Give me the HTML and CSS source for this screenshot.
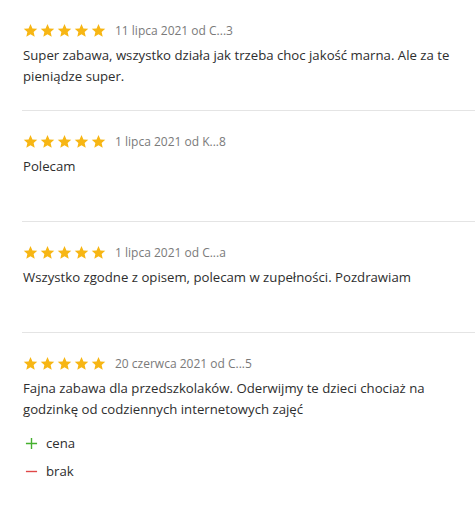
FILE: index.html
```html
<!DOCTYPE html>
<html lang="pl">
<head>
<meta charset="utf-8">
<link rel="stylesheet" href="styles.css">
</head>
<body>
<div class="reviews">
  <div class="review">
    <div class="meta">
      <span class="stars"><svg class="star" viewBox="0 0 24 24"><path d="M12 1.5l3.1 7.1 7.7.7-5.8 5.1 1.7 7.6L12 18l-6.7 4 1.7-7.6L1.2 9.3l7.7-.7z"/></svg><svg class="star" viewBox="0 0 24 24"><path d="M12 1.5l3.1 7.1 7.7.7-5.8 5.1 1.7 7.6L12 18l-6.7 4 1.7-7.6L1.2 9.3l7.7-.7z"/></svg><svg class="star" viewBox="0 0 24 24"><path d="M12 1.5l3.1 7.1 7.7.7-5.8 5.1 1.7 7.6L12 18l-6.7 4 1.7-7.6L1.2 9.3l7.7-.7z"/></svg><svg class="star" viewBox="0 0 24 24"><path d="M12 1.5l3.1 7.1 7.7.7-5.8 5.1 1.7 7.6L12 18l-6.7 4 1.7-7.6L1.2 9.3l7.7-.7z"/></svg><svg class="star" viewBox="0 0 24 24"><path d="M12 1.5l3.1 7.1 7.7.7-5.8 5.1 1.7 7.6L12 18l-6.7 4 1.7-7.6L1.2 9.3l7.7-.7z"/></svg></span>
      <span class="date">11 lipca 2021 od C...3</span>
    </div>
    <p class="text">Super zabawa, wszystko działa jak trzeba choc jakość marna. Ale za te pieniądze super.</p>
  </div>
  <div class="review">
    <div class="meta">
      <span class="stars"><svg class="star" viewBox="0 0 24 24"><path d="M12 1.5l3.1 7.1 7.7.7-5.8 5.1 1.7 7.6L12 18l-6.7 4 1.7-7.6L1.2 9.3l7.7-.7z"/></svg><svg class="star" viewBox="0 0 24 24"><path d="M12 1.5l3.1 7.1 7.7.7-5.8 5.1 1.7 7.6L12 18l-6.7 4 1.7-7.6L1.2 9.3l7.7-.7z"/></svg><svg class="star" viewBox="0 0 24 24"><path d="M12 1.5l3.1 7.1 7.7.7-5.8 5.1 1.7 7.6L12 18l-6.7 4 1.7-7.6L1.2 9.3l7.7-.7z"/></svg><svg class="star" viewBox="0 0 24 24"><path d="M12 1.5l3.1 7.1 7.7.7-5.8 5.1 1.7 7.6L12 18l-6.7 4 1.7-7.6L1.2 9.3l7.7-.7z"/></svg><svg class="star" viewBox="0 0 24 24"><path d="M12 1.5l3.1 7.1 7.7.7-5.8 5.1 1.7 7.6L12 18l-6.7 4 1.7-7.6L1.2 9.3l7.7-.7z"/></svg></span>
      <span class="date">1 lipca 2021 od K...8</span>
    </div>
    <p class="text">Polecam</p>
  </div>
  <div class="review">
    <div class="meta">
      <span class="stars"><svg class="star" viewBox="0 0 24 24"><path d="M12 1.5l3.1 7.1 7.7.7-5.8 5.1 1.7 7.6L12 18l-6.7 4 1.7-7.6L1.2 9.3l7.7-.7z"/></svg><svg class="star" viewBox="0 0 24 24"><path d="M12 1.5l3.1 7.1 7.7.7-5.8 5.1 1.7 7.6L12 18l-6.7 4 1.7-7.6L1.2 9.3l7.7-.7z"/></svg><svg class="star" viewBox="0 0 24 24"><path d="M12 1.5l3.1 7.1 7.7.7-5.8 5.1 1.7 7.6L12 18l-6.7 4 1.7-7.6L1.2 9.3l7.7-.7z"/></svg><svg class="star" viewBox="0 0 24 24"><path d="M12 1.5l3.1 7.1 7.7.7-5.8 5.1 1.7 7.6L12 18l-6.7 4 1.7-7.6L1.2 9.3l7.7-.7z"/></svg><svg class="star" viewBox="0 0 24 24"><path d="M12 1.5l3.1 7.1 7.7.7-5.8 5.1 1.7 7.6L12 18l-6.7 4 1.7-7.6L1.2 9.3l7.7-.7z"/></svg></span>
      <span class="date">1 lipca 2021 od C...a</span>
    </div>
    <p class="text">Wszystko zgodne z opisem, polecam w zupełności. Pozdrawiam</p>
  </div>
  <div class="review">
    <div class="meta">
      <span class="stars"><svg class="star" viewBox="0 0 24 24"><path d="M12 1.5l3.1 7.1 7.7.7-5.8 5.1 1.7 7.6L12 18l-6.7 4 1.7-7.6L1.2 9.3l7.7-.7z"/></svg><svg class="star" viewBox="0 0 24 24"><path d="M12 1.5l3.1 7.1 7.7.7-5.8 5.1 1.7 7.6L12 18l-6.7 4 1.7-7.6L1.2 9.3l7.7-.7z"/></svg><svg class="star" viewBox="0 0 24 24"><path d="M12 1.5l3.1 7.1 7.7.7-5.8 5.1 1.7 7.6L12 18l-6.7 4 1.7-7.6L1.2 9.3l7.7-.7z"/></svg><svg class="star" viewBox="0 0 24 24"><path d="M12 1.5l3.1 7.1 7.7.7-5.8 5.1 1.7 7.6L12 18l-6.7 4 1.7-7.6L1.2 9.3l7.7-.7z"/></svg><svg class="star" viewBox="0 0 24 24"><path d="M12 1.5l3.1 7.1 7.7.7-5.8 5.1 1.7 7.6L12 18l-6.7 4 1.7-7.6L1.2 9.3l7.7-.7z"/></svg></span>
      <span class="date">20 czerwca 2021 od C...5</span>
    </div>
    <p class="text">Fajna zabawa dla przedszkolaków. Oderwijmy te dzieci chociaż na godzinkę od codziennych internetowych zajęć</p>
    <ul class="proscons">
      <li class="pc"><svg class="pc-icon" viewBox="0 0 14 14"><path d="M7 1v12M1 7h12" stroke="#45b02f" stroke-width="1.5" fill="none"/></svg><span>cena</span></li>
      <li class="pc"><svg class="pc-icon" viewBox="0 0 14 14"><path d="M1 7h12" stroke="#e04848" stroke-width="1.5" fill="none"/></svg><span>brak</span></li>
    </ul>
  </div>
</div>
</body>
</html>
```
FILE: styles.css
```css
html, body {
  margin: 0;
  padding: 0;
  background: #fff;
}
body {
  font-family: "Open Sans", "Noto Sans", sans-serif;
  color: #333;
}
.reviews {
  padding-left: 22px;
}
.review {
  min-height: 88px;
  padding-top: 22px;
  border-top: 1px solid #e4e4e4;
}
.review:first-child {
  border-top: none;
}
.meta {
  display: flex;
  align-items: center;
  height: 17px;
  padding-left: 1px;
}
.stars {
  display: flex;
  gap: 2px;
}
.star {
  width: 15px;
  height: 15px;
  fill: #f7b614;
}
.date {
  margin-left: 9px;
  font-size: 12px;
  color: #7a7a7a;
}
.text {
  margin: 6px 0 0 1px;
  font-size: 13.2px;
  line-height: 21px;
  color: #2e2e2e;
}
.proscons {
  list-style: none;
  margin: 13px 0 0;
  padding: 0 0 0 3px;
  display: flex;
  flex-direction: column;
  gap: 7px;
}
.pc {
  display: flex;
  align-items: center;
  gap: 8px;
  font-size: 13.2px;
  line-height: 21px;
  color: #2e2e2e;
}
.pc-icon {
  width: 13px;
  height: 13px;
}
```
